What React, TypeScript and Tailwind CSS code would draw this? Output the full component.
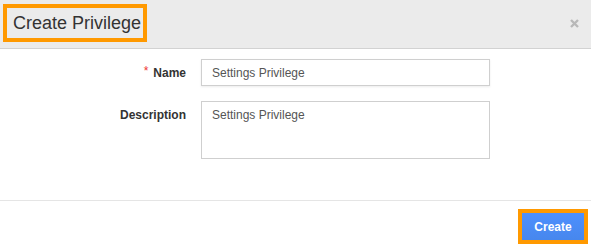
import React from "react";

export default function App() {
  return (
    <div className="w-[591px] h-[249px] bg-white flex flex-col" style={{ fontFamily: '"Liberation Sans", Arial, sans-serif' }}>
      <div className="h-[49px] bg-[#ebebeb] border-b border-[#d2d2d2] flex items-start justify-between pl-[3px] pr-[12px] pt-[4px] shrink-0">
        <div className="h-[38px] w-[144px] border-[4px] border-[#ff9900] flex items-center pl-[6px]">
          <span className="text-[18px] text-[#333] leading-none">Create Privilege</span>
        </div>
        <svg width="9" height="9" viewBox="0 0 9 9" className="mt-[15px]">
          <path d="M1 1 L8 8 M8 1 L1 8" stroke="#b8b8b8" strokeWidth="2.4" strokeLinecap="butt" />
        </svg>
      </div>
      <div className="flex-1 flex flex-col gap-[15px] pt-[10px]">
        <div className="flex items-center">
          <label className="w-[186px] text-right text-[12px] font-bold text-[#333]">
            <span className="text-[#e33] font-normal mr-[5px] relative -top-[2px]">*</span>Name
          </label>
          <div className="ml-[15px] w-[289px] h-[27px] border border-[#cfcfcf] shadow-[0_1px_2px_rgba(0,0,0,0.08)] flex items-center pl-[10px] text-[12px] text-[#555]">
            Settings Privilege
          </div>
        </div>
        <div className="flex items-start">
          <label className="w-[186px] text-right text-[12px] font-bold text-[#333] pt-[5px]">Description</label>
          <div className="ml-[15px] w-[289px] h-[58px] border border-[#cfcfcf] pl-[10px] pt-[6px] text-[12px] text-[#555] leading-[14px]">
            Settings Privilege
          </div>
        </div>
      </div>
      <div className="h-[49px] border-t border-[#e5e5e5] flex items-start justify-end pt-[8px] pr-[3px] shrink-0">
        <div className="border-[4px] border-[#ff9900]">
          <button className="w-[62px] h-[27px] bg-gradient-to-b from-[#4d90fe] to-[#4787ed] text-white text-[12px] font-bold flex items-center justify-center">
            Create
          </button>
        </div>
      </div>
    </div>
  );
}
